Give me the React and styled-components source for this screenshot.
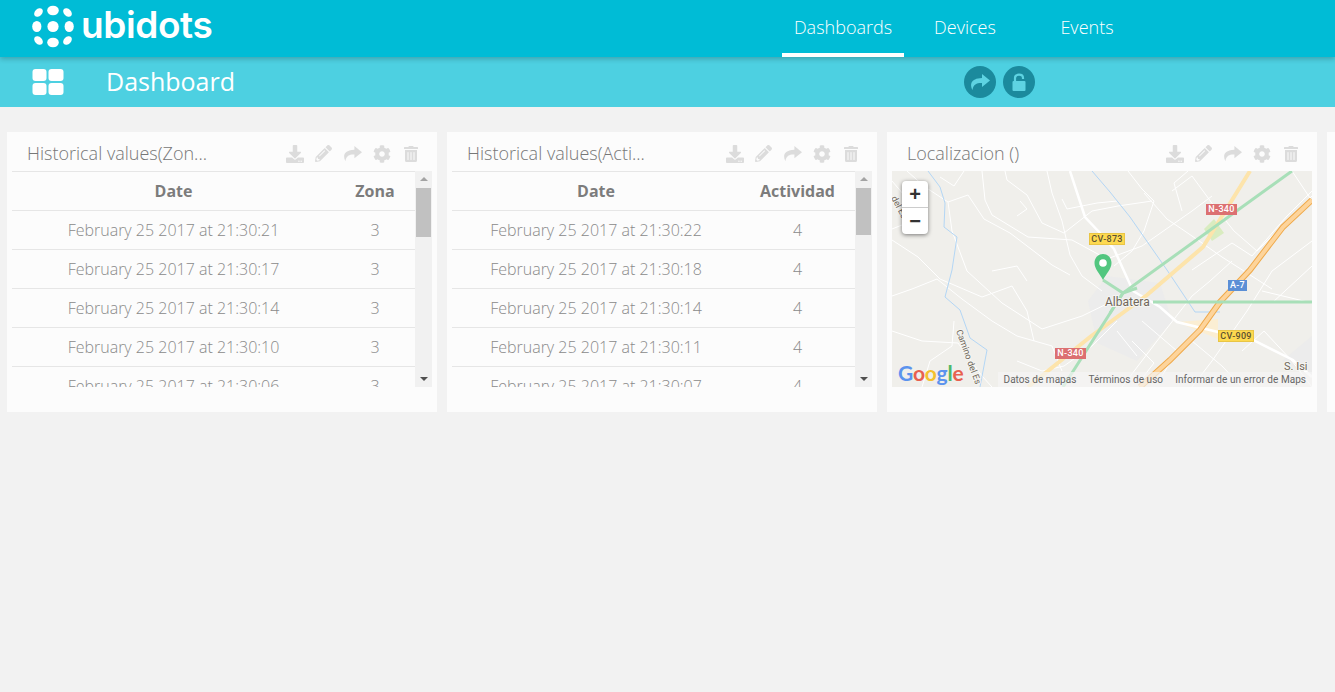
import styled, { createGlobalStyle } from "styled-components";
import { FaCog, FaDownload, FaPencilAlt, FaTrashAlt } from "react-icons/fa";

const GlobalStyle = createGlobalStyle`
  html, body {
    margin: 0;
    height: 100%;
    overflow: hidden;
    background: #f2f2f2;
    font-family: "Open Sans", "Liberation Sans", sans-serif;
  }
`;

const navItems = ["Dashboards", "Devices", "Events"];

const zonaRows = [
  ["February 25 2017 at 21:30:21", "3"],
  ["February 25 2017 at 21:30:17", "3"],
  ["February 25 2017 at 21:30:14", "3"],
  ["February 25 2017 at 21:30:10", "3"],
  ["February 25 2017 at 21:30:06", "3"],
];

const actividadRows = [
  ["February 25 2017 at 21:30:22", "4"],
  ["February 25 2017 at 21:30:18", "4"],
  ["February 25 2017 at 21:30:14", "4"],
  ["February 25 2017 at 21:30:11", "4"],
  ["February 25 2017 at 21:30:07", "4"],
];

const thinRoads = [
  "90,0 93,29 100,44 136,66 180,69 215,88 250,75 300,40 320,25",
  "113,0 115,9 135,24 150,52 172,62 200,40 226,35 260,30",
  "56,31 76,24 92,48 118,62 160,94 178,104",
  "15,0 33,16 56,31 60,60 75,100 110,132 150,158 190,145 225,128",
  "0,69 26,86 48,108 90,126 120,115 135,140 142,170",
  "0,10 12,24 20,50 0,58",
  "0,125 20,118 45,108 70,128 100,150 125,165 160,175 170,200",
  "0,160 30,170 66,172 90,205 100,216",
  "125,190 150,200 172,195 200,175 225,150",
  "30,216 38,190 60,175 62,150",
  "155,0 160,22 170,50 178,84 190,105 210,120",
  "125,45 135,38 128,30",
  "100,100 125,95 135,110",
  "170,28 175,38 205,32 225,30",
  "236,0 250,18 262,30 252,60 240,80 222,95",
  "252,22 275,48 300,65 330,86 380,118",
  "280,20 300,5 322,35 342,60 365,80 420,25",
  "340,90 318,110 300,125 265,170 230,216",
  "420,70 380,100 355,140 320,190 300,216",
  "300,170 330,195 350,216",
  "350,180 372,160 400,190 420,216",
  "250,150 285,180 270,205",
  "240,170 262,192 248,210",
  "225,160 245,185",
  "380,132 420,95",
  "300,99 340,72 360,85 395,45 420,20",
  "400,0 420,30",
  "290,40 282,12 296,0",
  "370,120 420,132",
  "72,0 62,15 48,6",
];

const majorRoad = "178,0 193,46 208,62 222,78 241,120 268,136 285,151 326,161 361,169 401,189 420,206";
const motorway = "420,29 391,56 358,99 328,131 308,159 278,189 248,216";

export default function App() {
  return (
    <>
      <GlobalStyle />
      <TopBar>
        <Logo>
          <LogoDots />
          <LogoText>ubidots</LogoText>
        </Logo>
        <Nav>
          {navItems.map((item) => (
            <NavItem key={item} $active={item === "Dashboards"}>
              {item}
            </NavItem>
          ))}
        </Nav>
      </TopBar>

      <SubBar>
        <GridIcon />
        <PageTitle>Dashboard</PageTitle>
        <RoundButtons>
          <RoundButton>
            <ShareIcon size={20} />
          </RoundButton>
          <RoundButton>
            <LockIcon />
          </RoundButton>
        </RoundButtons>
      </SubBar>

      <Cards>
        <Card>
          <CardHeader title="Historical values(Zon..." />
          <TableWidget
            columns="323px 80px"
            valueLabel="Zona"
            rows={zonaRows}
            thumbHeight={49}
          />
        </Card>
        <Card>
          <CardHeader title="Historical values(Acti..." />
          <TableWidget
            columns="288px 115px"
            valueLabel="Actividad"
            rows={actividadRows}
            thumbHeight={47}
          />
        </Card>
        <Card>
          <CardHeader title="Localizacion ()" />
          <MapBox>
            <MapDrawing />
            <ZoomControl>
              <ZoomButton>+</ZoomButton>
              <ZoomButton>−</ZoomButton>
            </ZoomControl>
            <GoogleLogo>
              <Letter $color="#5b93ee">G</Letter>
              <Letter $color="#e8604f">o</Letter>
              <Letter $color="#f4c02f">o</Letter>
              <Letter $color="#5b93ee">g</Letter>
              <Letter $color="#4fb868">l</Letter>
              <Letter $color="#e8604f">e</Letter>
            </GoogleLogo>
            <Attribution>
              <span>Datos de mapas</span>
              <span>Términos de uso</span>
              <span>Informar de un error de Maps</span>
            </Attribution>
          </MapBox>
        </Card>
        <Card />
      </Cards>
    </>
  );
}

function CardHeader({ title }) {
  return (
    <Header>
      <CardTitle>{title}</CardTitle>
      <CardTools>
        <Tool $size={18}>
          <FaDownload />
        </Tool>
        <Tool>
          <FaPencilAlt />
        </Tool>
        <Tool>
          <ShareIcon size={19} />
        </Tool>
        <Tool $size={18}>
          <FaCog />
        </Tool>
        <Tool $size={16}>
          <FaTrashAlt />
        </Tool>
      </CardTools>
    </Header>
  );
}

function TableWidget({ columns, valueLabel, rows, thumbHeight }) {
  return (
    <TableArea>
      <TableViewport>
        <Row $columns={columns} $head>
          <span>Date</span>
          <span>{valueLabel}</span>
        </Row>
        {rows.map(([date, value]) => (
          <Row key={date} $columns={columns}>
            <span>{date}</span>
            <span>{value}</span>
          </Row>
        ))}
      </TableViewport>
      <Scrollbar>
        <ScrollArrow $up />
        <ScrollTrack>
          <ScrollThumb $height={thumbHeight} />
        </ScrollTrack>
        <ScrollArrow />
      </Scrollbar>
    </TableArea>
  );
}

function ShareIcon({ size }) {
  return (
    <svg width={size} height={size * 0.8} viewBox="0 0 20 16" fill="currentColor">
      <path d="M12 0 L20 6.5 L12 13 V9 C7 8.8 3.5 10 2.5 16 C0 11 0 4.5 12 4 Z" />
    </svg>
  );
}

function LockIcon() {
  return (
    <svg width="14" height="19" viewBox="0 0 14 19">
      <rect x="0.5" y="8" width="13" height="10" rx="1" fill="currentColor" />
      <path d="M3 8 V5 C3 0.6 11 0.6 11 5 V6" fill="none" stroke="currentColor" strokeWidth="2.2" />
    </svg>
  );
}

function LogoDots() {
  return (
    <svg width="44" height="44" viewBox="0 0 44 44">
      <g fill="#fff">
        <circle cx="21" cy="21.5" r="5.6" />
        <ellipse cx="21" cy="5.5" rx="5.8" ry="4.8" />
        <ellipse cx="21" cy="37.5" rx="5.8" ry="4.8" />
        <ellipse cx="4.8" cy="21.5" rx="4.6" ry="5.6" />
        <ellipse cx="37.2" cy="21.5" rx="4.6" ry="5.6" />
        <ellipse cx="6.5" cy="7.5" rx="5" ry="3.6" transform="rotate(-45 6.5 7.5)" />
        <ellipse cx="35.5" cy="7.5" rx="5" ry="3.6" transform="rotate(45 35.5 7.5)" />
        <ellipse cx="6.5" cy="35.5" rx="5" ry="3.6" transform="rotate(45 6.5 35.5)" />
        <ellipse cx="35.5" cy="35.5" rx="5" ry="3.6" transform="rotate(-45 35.5 35.5)" />
      </g>
    </svg>
  );
}

function GridIcon() {
  return (
    <svg width="32" height="27" viewBox="0 0 32 27">
      <g fill="#fff">
        <rect x="0.5" y="0" width="14" height="12" rx="3" />
        <rect x="16.5" y="0" width="15" height="12" rx="3" />
        <rect x="0.5" y="14" width="14" height="12" rx="3" />
        <rect x="16.5" y="14" width="15" height="12" rx="3" />
      </g>
    </svg>
  );
}

function MapDrawing() {
  return (
    <svg width="420" height="216" viewBox="0 0 420 216">
      <rect width="420" height="216" fill="#f0efeb" />
      <path d="M215 105 L268 112 L280 150 L245 190 L205 172 L196 130 Z" fill="#ececec" />
      <path d="M390 190 L420 165 L420 205 Z" fill="#ececec" />
      <path d="M320 70 L332 62 L322 48 L312 58 Z" fill="#d9ecc0" />
      <path d="M285 151 L326 148 L326 168 Z" fill="#fbeed3" />

      <g fill="none" stroke="#fff" strokeWidth="1" strokeLinejoin="round">
        {thinRoads.map((points) => (
          <polyline key={points} points={points} />
        ))}
      </g>
      <polyline points={majorRoad} fill="none" stroke="#fff" strokeWidth="2.5" />

      <g fill="none" stroke="#b3d6f5" strokeWidth="1">
        <polyline points="36,0 48,16 53,32 52,56 65,66 60,99 53,126 68,139 78,167 95,179 88,216" />
        <polyline points="200,0 218,21 238,46 261,79 275,99 303,141 328,141" />
      </g>

      <polyline points="358,0 311,76 255,124 198,166 136,216" fill="none" stroke="#fde4ab" strokeWidth="4" />

      <polyline points={motorway} fill="none" stroke="#efa94a" strokeWidth="6" />
      <polyline points={motorway} fill="none" stroke="#fdd49b" strokeWidth="4" />

      <g fill="none" stroke="#a8dfb8" strokeWidth="3">
        <polyline points="400,0 231,122 171,216" />
        <polyline points="261,131 420,131" />
        <polyline points="211,109 231,122 245,117" />
        <polyline points="218,142 231,122" />
      </g>

      <MapSign x="197" y="62" width="36" height="12" fill="#fdd94f" stroke="#e9c545" color="#5c5030" label="CV-873" />
      <MapSign x="314" y="33" width="31" height="11" fill="#dc7071" stroke="#dc7071" color="#fff" label="N-340" />
      <MapSign x="163" y="177" width="31" height="11" fill="#dc7071" stroke="#dc7071" color="#fff" label="N-340" />
      <MapSign x="336" y="109" width="19" height="11" fill="#5b8fd6" stroke="#5b8fd6" color="#fff" label="A-7" />
      <MapSign x="326" y="159" width="36" height="12" fill="#fdd94f" stroke="#e9c545" color="#5c5030" label="CV-909" />

      <MapLabel x="213" y="135" fontSize="12">Albatera</MapLabel>
      <MapLabel x="392" y="199" fontSize="11">S. Isi</MapLabel>
      <MapLabel x="64" y="160" fontSize="9" transform="rotate(70 64 160)">Camino del Es</MapLabel>
      <MapLabel x="-1" y="27" fontSize="9" transform="rotate(62 -1 27)">del Es</MapLabel>

      <path
        d="M211 83 C205.5 83 202.5 87.5 202.5 92 C202.5 98 208 103 211 109 C214 103 219.5 98 219.5 92 C219.5 87.5 216.5 83 211 83 Z"
        fill="#52c67f"
      />
      <circle cx="211" cy="92" r="3.8" fill="#fff" />
    </svg>
  );
}

function MapSign({ x, y, width, height, fill, stroke, color, label }) {
  const left = Number(x);
  const top = Number(y);
  const w = Number(width);
  const h = Number(height);
  return (
    <g>
      <rect x={left + 0.5} y={top + 0.5} width={w - 1} height={h - 1} fill={fill} stroke={stroke} />
      <SignText x={left + w / 2} y={top + h - 3} fill={color}>
        {label}
      </SignText>
    </g>
  );
}

const TopBar = styled.header`
  height: 57px;
  display: grid;
  grid-template-columns: 782px auto;
  background: #00bcd6;
  position: relative;
  z-index: 1;
  box-shadow: 0 2px 5px rgba(0, 0, 0, 0.22);
`;

const Logo = styled.div`
  display: flex;
  align-items: flex-start;
  gap: 5px;
  padding: 5px 0 0 32px;
`;

const LogoText = styled.span`
  font-family: "Inter", "Open Sans", sans-serif;
  font-size: 37px;
  font-weight: 600;
  line-height: 40px;
  letter-spacing: -0.4px;
  color: #fff;
`;

const Nav = styled.nav`
  display: flex;
`;

const NavItem = styled.a`
  width: 122px;
  box-sizing: border-box;
  padding-top: 14px;
  text-align: center;
  font-size: 18px;
  font-weight: 300;
  line-height: 26px;
  color: #fff;
  border-bottom: 4px solid ${(props) => (props.$active ? "#fff" : "transparent")};
`;

const SubBar = styled.div`
  height: 50px;
  display: grid;
  grid-template-columns: 74px 858px auto;
  align-items: center;
  padding-left: 32px;
  background: #4dd0e1;

  & > svg {
    margin-top: 1px;
  }
`;

const PageTitle = styled.h1`
  margin: 0;
  font-size: 25px;
  font-weight: 400;
  line-height: 48px;
  padding-bottom: 2px;
  color: #fff;
`;

const RoundButtons = styled.div`
  display: flex;
  gap: 7px;
`;

const RoundButton = styled.span`
  width: 32px;
  height: 32px;
  display: flex;
  align-items: center;
  justify-content: center;
  border-radius: 50%;
  color: #5ed3e2;
  background: #1b8a9d;
`;

const Cards = styled.main`
  display: flex;
  gap: 10px;
  padding: 25px 0 0 7px;
  width: 1800px;
`;

const Card = styled.section`
  width: 430px;
  height: 280px;
  background: #fcfcfc;
`;

const Header = styled.div`
  height: 39px;
  box-sizing: border-box;
  padding: 2px 12px 0 20px;
  display: flex;
  align-items: center;
  justify-content: space-between;
`;

const CardTitle = styled.h2`
  margin: 2px 0 0;
  font-size: 18px;
  font-weight: 300;
  line-height: 35px;
  color: #777;
  white-space: nowrap;
`;

const CardTools = styled.div`
  display: flex;
  align-items: center;
  margin-top: 2px;
`;

const Tool = styled.span`
  width: 29px;
  display: flex;
  justify-content: center;
  font-size: ${(props) => props.$size || 17}px;
  color: #dcdcdc;
`;

const TableArea = styled.div`
  display: flex;
  height: 216px;
  margin: 0 5px;
  border-top: 1px solid #e6e6e6;
  box-sizing: border-box;
`;

const TableViewport = styled.div`
  width: 403px;
  overflow: hidden;
`;

const Row = styled.div`
  height: 39px;
  box-sizing: border-box;
  display: grid;
  grid-template-columns: ${(props) => props.$columns};
  align-items: center;
  text-align: center;
  font-size: 16px;
  font-weight: ${(props) => (props.$head ? 700 : 300)};
  color: ${(props) => (props.$head ? "#7c7c7c" : "#8a8a8a")};
  border-bottom: 1px solid #e6e6e6;
  white-space: nowrap;
  line-height: 38px;
`;

const Scrollbar = styled.div`
  width: 17px;
  margin-top: -1px;
  display: flex;
  flex-direction: column;
  background: #f1f1f1;
`;

const ScrollArrow = styled.div`
  height: 16px;
  display: flex;
  align-items: center;
  justify-content: center;

  &::before {
    content: "";
    width: 0;
    height: 0;
    border-left: 4px solid transparent;
    border-right: 4px solid transparent;
    ${(props) =>
      props.$up
        ? "border-bottom: 4px solid #a3a3a3;"
        : "border-top: 4px solid #505050;"}
  }
`;

const ScrollTrack = styled.div`
  flex: 1;
  padding: 1px 1px 0;
`;

const ScrollThumb = styled.div`
  height: ${(props) => props.$height}px;
  background: #c1c1c1;
`;

const MapBox = styled.div`
  position: relative;
  width: 420px;
  height: 216px;
  margin: 0 5px;
  overflow: hidden;

  & > svg {
    display: block;
  }
`;

const SignText = styled.text`
  font-family: "Roboto", "Liberation Sans", sans-serif;
  font-size: 9px;
  font-weight: 500;
  letter-spacing: 0.3px;
  text-anchor: middle;
`;

const MapLabel = styled.text`
  font-family: "Roboto", "Liberation Sans", sans-serif;
  fill: #70675a;
  paint-order: stroke;
  stroke: #f5f5f2;
  stroke-width: 2px;
`;

const ZoomControl = styled.div`
  position: absolute;
  top: 10px;
  left: 10px;
  width: 26px;
  background: #fff;
  border-radius: 4px;
  box-shadow: 0 1px 4px rgba(0, 0, 0, 0.5);
`;

const ZoomButton = styled.div`
  height: 26px;
  display: flex;
  align-items: center;
  justify-content: center;
  font-family: "Liberation Sans", sans-serif;
  font-size: 20px;
  font-weight: 700;
  color: #333;

  & + & {
    border-top: 1px solid #ccc;
  }
`;

const GoogleLogo = styled.div`
  position: absolute;
  left: 6px;
  bottom: 0;
  font-family: "Lato", "Liberation Sans", sans-serif;
  font-size: 21px;
  font-weight: 700;
  line-height: 28px;
  letter-spacing: -0.2px;
`;

const Letter = styled.span`
  color: ${(props) => props.$color};
`;

const Attribution = styled.div`
  position: absolute;
  right: 0;
  bottom: 0;
  display: flex;
  height: 15px;
  font-family: "Roboto", "Liberation Sans", sans-serif;
  font-size: 10px;
  line-height: 15px;
  letter-spacing: 0.04px;
  color: #666;
  background: rgba(245, 245, 245, 0.7);

  & > span {
    padding: 0 6px;
  }
`;
